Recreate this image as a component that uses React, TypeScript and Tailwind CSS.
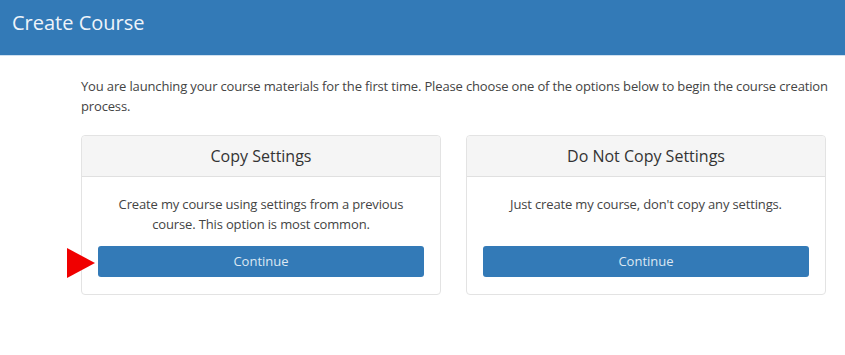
export default function App() {
  const cards = [
    {
      title: 'Copy Settings',
      text: 'Create my course using settings from a previous course. This option is most common.',
      arrow: true,
    },
    {
      title: 'Do Not Copy Settings',
      text: "Just create my course, don't copy any settings.",
      arrow: false,
    },
  ]

  return (
    <div className="w-[845px] h-[355px] bg-white font-['Open_Sans',sans-serif] text-[#444]">
      {/* Page header */}
      <div className="h-[56px] bg-[#337ab7] border-b border-[#cfe0f0] px-[12px] pt-[9px]">
        <h1 className="text-[20px] leading-[28px] text-[#eef4fa]">Create Course</h1>
      </div>

      <div className="pl-[81px] pr-[12px] pt-[20px]">
        <p className="text-[13px] leading-[20px] tracking-[-0.15px]">
          You are launching your course materials for the first time. Please choose one of the options below to begin the course creation process.
        </p>

        <div className="mt-[19px] flex gap-[25px]">
          {cards.map((c) => (
            <div key={c.title} className="relative w-[360px] h-[160px] border border-[#e3e3e3] rounded-[4px] flex flex-col">
              <div className="h-[41px] bg-[#f5f5f5] border-b border-[#e0e0e0] rounded-t-[4px] flex items-center justify-center text-[16px] text-[#333]">
                {c.title}
              </div>
              <div className="flex-1 px-[16px] pt-[17px] flex flex-col">
                <p className="h-[52px] text-center text-[13px] leading-[20px] px-[6px] tracking-[-0.15px]">{c.text}</p>
                <button className="h-[31px] rounded-[3px] bg-[#337ab7] text-[13px] text-[#dce8f3]">
                  Continue
                </button>
              </div>
              {c.arrow && (
                <svg className="absolute left-[-15px] top-[112px]" width="28" height="30" viewBox="0 0 28 30">
                  <polygon points="0,0 28,15 0,30" fill="#f00000" />
                </svg>
              )}
            </div>
          ))}
        </div>
      </div>
    </div>
  )
}
